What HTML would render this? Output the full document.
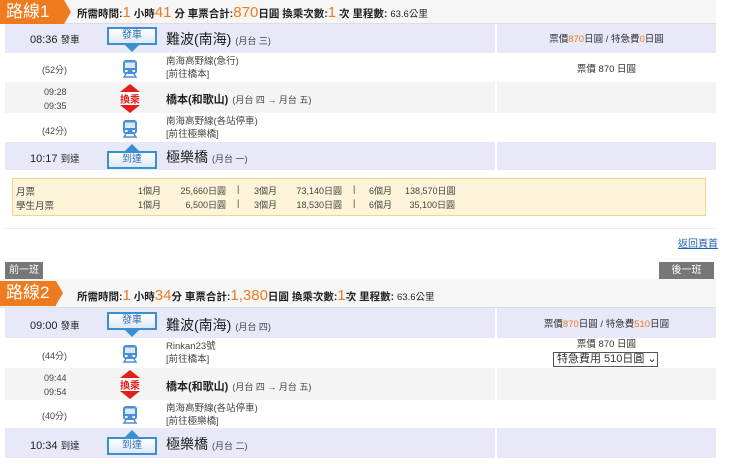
<!DOCTYPE html>
<html><head><meta charset="utf-8"><style>
*{margin:0;padding:0;box-sizing:border-box}
body{width:740px;height:464px;background:#fff;position:relative;overflow:hidden;font-family:"Liberation Sans","Noto Sans CJK TC",sans-serif;color:#333}
.a{position:absolute}
.hdr{background:#f6f6f6;border-bottom:1px solid #ddd}
.tag{background:#ef7b1f;color:#fff;font-size:17px;line-height:24px;padding-left:6px}
.tag:after{content:"";position:absolute;right:-7px;top:0;border-left:7px solid #ef7b1f;border-top:12px solid transparent;border-bottom:12px solid transparent}
.sum{font-size:10.5px;font-weight:bold;color:#222;white-space:nowrap}
.sum .o{color:#ef7b1f;font-weight:normal;font-size:15px}
.sum .n{font-weight:normal;font-size:9.5px}
.row{left:5px;width:711px}
.lav{background:#e7e9f8}
.gry{background:#f4f4f4}
.div{left:495px;width:2px;background:#fff}
.t{font-size:11px;color:#222;white-space:nowrap}
.s{font-size:9px;color:#444;white-space:nowrap}
.st{font-size:14px;color:#222;white-space:nowrap}
.st small{font-size:9px;color:#444;margin-left:4px}
.ln{font-size:9.5px;color:#444;line-height:13px;white-space:nowrap}
.badge{width:50px;height:18px;border:2px solid #3a8fd0;background:linear-gradient(#fff,#dde9f6);color:#2a6db5;font-size:10px;text-align:center;line-height:14px}
.tri-d{width:0;height:0;border-left:7px solid transparent;border-right:7px solid transparent;border-top:7px solid #3a8fd0}
.tri-u{width:0;height:0;border-left:7px solid transparent;border-right:7px solid transparent;border-bottom:7px solid #3a8fd0}
.pr{font-size:9.5px;line-height:12px;color:#333;text-align:center;white-space:nowrap}
.pr b{color:#ef7b1f;font-weight:normal}
.btn{background:#777;color:#fff;font-size:10px;text-align:center;line-height:17px}
</style></head><body>

<!-- ROUTE 1 -->
<div class="a hdr" style="left:0;top:0;width:716px;height:24px"></div>
<div class="a tag" style="left:0;top:0;width:64px;height:24px">路線1</div>
<div class="a sum" style="left:77px;top:4px">所需時間:<span class="o">1</span> 小時<span class="o">41</span> 分 車票合計:<span class="o">870</span>日圓 換乘次數:<span class="o">1</span> 次 里程數: <span class="n">63.6公里</span></div>

<div class="a row lav" style="top:24px;height:29px"></div>
<div class="a row" style="top:53px;height:29px;background:#fff"></div>
<div class="a row gry" style="top:82px;height:31px"></div>
<div class="a row" style="top:113px;height:29px;background:#fff"></div>
<div class="a row lav" style="top:142px;height:28px"></div>
<div class="a div" style="top:24px;height:146px"></div>

<div class="a t" style="left:30px;top:32px">08:36 <span style="font-size:9.5px">發車</span></div>
<div class="a badge" style="left:107px;top:27px">發車</div>
<div class="a tri-d" style="left:125px;top:45px"></div>
<div class="a st" style="left:166px;top:29px">難波(南海)<small>(月台 三)</small></div>
<div class="a pr" style="left:497px;width:219px;top:34px">票價<b>870</b>日圓 / 特急費<b>0</b>日圓</div>

<div class="a s" style="left:42px;top:63px">(52分)</div>
<svg class="a" style="left:122px;top:59px" width="16" height="20" viewBox="0 0 16 20"><rect x="1" y="1" width="14" height="14" rx="3" fill="#4a8fd4"/><rect x="3" y="3.5" width="10" height="5.5" fill="#dbe9f7"/><rect x="3" y="11" width="2.5" height="2" fill="#fff"/><rect x="10.5" y="11" width="2.5" height="2" fill="#fff"/><path d="M4 15 L1.5 19 M12 15 L14.5 19 M3 18 H13" stroke="#4a8fd4" stroke-width="1.5"/></svg>
<div class="a ln" style="left:166px;top:55px">南海高野線(急行)<br>[前往橋本]</div>
<div class="a pr" style="left:497px;width:219px;top:64px">票價 870 日圓</div>

<div class="a s" style="left:44px;top:87px">09:28</div>
<div class="a s" style="left:44px;top:101px">09:35</div>
<svg class="a" style="left:120px;top:84px" width="20" height="29" viewBox="0 0 20 29"><path d="M10 0 L20 8 L0 8 Z M0 21 L20 21 L10 29 Z" fill="#e0201a"/><rect x="0" y="8" width="20" height="13" fill="#fff"/></svg>
<div class="a" style="left:118px;top:91px;width:24px;font-size:10px;font-weight:bold;color:#e0201a;text-align:center">換乘</div>
<div class="a st" style="left:166px;top:91px;font-size:11px;font-weight:bold">橋本(和歌山)<small style="font-weight:normal">(月台 四 → 月台 五)</small></div>

<div class="a s" style="left:42px;top:124px">(42分)</div>
<svg class="a" style="left:122px;top:119px" width="16" height="20" viewBox="0 0 16 20"><rect x="1" y="1" width="14" height="14" rx="3" fill="#4a8fd4"/><rect x="3" y="3.5" width="10" height="5.5" fill="#dbe9f7"/><rect x="3" y="11" width="2.5" height="2" fill="#fff"/><rect x="10.5" y="11" width="2.5" height="2" fill="#fff"/><path d="M4 15 L1.5 19 M12 15 L14.5 19 M3 18 H13" stroke="#4a8fd4" stroke-width="1.5"/></svg>
<div class="a ln" style="left:166px;top:115px">南海高野線(各站停車)<br>[前往極樂橋]</div>

<div class="a t" style="left:30px;top:151px">10:17 <span style="font-size:9.5px">到達</span></div>
<div class="a tri-u" style="left:125px;top:144px"></div>
<div class="a badge" style="left:107px;top:151px">到達</div>
<div class="a st" style="left:166px;top:147px">極樂橋<small>(月台 一)</small></div>

<div class="a" style="left:12px;top:178px;width:694px;height:38px;background:#fdf4d9;border:1px solid #eed68a"></div>
<div class="a s" style="left:16px;top:184px;font-size:9.5px">月票</div>
<div class="a s" style="left:16px;top:198px;font-size:9.5px">學生月票</div>
<div class="a s" style="left:138px;top:184px">1個月</div>
<div class="a s" style="left:138px;top:198px">1個月</div>
<div class="a s" style="left:180px;top:184px;width:46px;text-align:right">25,660日圓</div>
<div class="a s" style="left:180px;top:198px;width:46px;text-align:right">6,500日圓</div>
<div class="a s" style="left:237px;top:184px">|</div><div class="a s" style="left:237px;top:198px">|</div>
<div class="a s" style="left:254px;top:184px">3個月</div><div class="a s" style="left:254px;top:198px">3個月</div>
<div class="a s" style="left:295px;top:184px;width:47px;text-align:right">73,140日圓</div>
<div class="a s" style="left:295px;top:198px;width:47px;text-align:right">18,530日圓</div>
<div class="a s" style="left:353px;top:184px">|</div><div class="a s" style="left:353px;top:198px">|</div>
<div class="a s" style="left:369px;top:184px">6個月</div><div class="a s" style="left:369px;top:198px">6個月</div>
<div class="a s" style="left:405px;top:184px;width:50px;text-align:right">138,570日圓</div>
<div class="a s" style="left:405px;top:198px;width:50px;text-align:right">35,100日圓</div>
<div class="a" style="left:5px;top:228px;width:711px;height:1px;background:#eee"></div>

<div class="a" style="left:678px;top:235px;font-size:10px;color:#1a5fb4;text-decoration:underline">返回頁首</div>

<div class="a btn" style="left:5px;top:262px;width:38px;height:17px">前一班</div>
<div class="a btn" style="left:659px;top:262px;width:55px;height:17px">後一班</div>

<!-- ROUTE 2 -->
<div class="a hdr" style="left:0;top:279px;width:716px;height:29px"></div>
<div class="a tag" style="left:0;top:281px;width:56px;height:25px">路線2</div>
<div class="a sum" style="left:77px;top:287px">所需時間:<span class="o">1</span> 小時<span class="o">34</span>分 車票合計:<span class="o">1,380</span>日圓 換乘次數:<span class="o">1</span>次 里程數: <span class="n">63.6公里</span></div>

<div class="a row lav" style="top:308px;height:30px"></div>
<div class="a row" style="top:338px;height:30px;background:#fff"></div>
<div class="a row gry" style="top:368px;height:32px"></div>
<div class="a row" style="top:400px;height:28px;background:#fff"></div>
<div class="a row lav" style="top:428px;height:30px"></div>
<div class="a div" style="top:308px;height:150px"></div>

<div class="a t" style="left:30px;top:318px">09:00 <span style="font-size:9.5px">發車</span></div>
<div class="a badge" style="left:107px;top:312px">發車</div>
<div class="a tri-d" style="left:125px;top:330px"></div>
<div class="a st" style="left:166px;top:315px">難波(南海)<small>(月台 四)</small></div>
<div class="a pr" style="left:497px;width:219px;top:319px">票價<b>870</b>日圓 / 特急費<b>510</b>日圓</div>

<div class="a s" style="left:42px;top:349px">(44分)</div>
<svg class="a" style="left:122px;top:344px" width="16" height="20" viewBox="0 0 16 20"><rect x="1" y="1" width="14" height="14" rx="3" fill="#4a8fd4"/><rect x="3" y="3.5" width="10" height="5.5" fill="#dbe9f7"/><rect x="3" y="11" width="2.5" height="2" fill="#fff"/><rect x="10.5" y="11" width="2.5" height="2" fill="#fff"/><path d="M4 15 L1.5 19 M12 15 L14.5 19 M3 18 H13" stroke="#4a8fd4" stroke-width="1.5"/></svg>
<div class="a ln" style="left:166px;top:340px">Rinkan23號<br>[前往橋本]</div>
<div class="a pr" style="left:497px;width:219px;top:339px">票價 870 日圓</div>
<div class="a" style="left:553px;top:352px;width:105px;height:15px;border:1px solid #555;background:#fff;font-size:11px;line-height:13px;padding-left:3px;white-space:nowrap">特急費用 510日圓 ⌄</div>

<div class="a s" style="left:44px;top:373px">09:44</div>
<div class="a s" style="left:44px;top:387px">09:54</div>
<svg class="a" style="left:120px;top:370px" width="20" height="29" viewBox="0 0 20 29"><path d="M10 0 L20 8 L0 8 Z M0 21 L20 21 L10 29 Z" fill="#e0201a"/><rect x="0" y="8" width="20" height="13" fill="#fff"/></svg>
<div class="a" style="left:118px;top:377px;width:24px;font-size:10px;font-weight:bold;color:#e0201a;text-align:center">換乘</div>
<div class="a st" style="left:166px;top:378px;font-size:11px;font-weight:bold">橋本(和歌山)<small style="font-weight:normal">(月台 四 → 月台 五)</small></div>

<div class="a s" style="left:42px;top:409px">(40分)</div>
<svg class="a" style="left:122px;top:405px" width="16" height="20" viewBox="0 0 16 20"><rect x="1" y="1" width="14" height="14" rx="3" fill="#4a8fd4"/><rect x="3" y="3.5" width="10" height="5.5" fill="#dbe9f7"/><rect x="3" y="11" width="2.5" height="2" fill="#fff"/><rect x="10.5" y="11" width="2.5" height="2" fill="#fff"/><path d="M4 15 L1.5 19 M12 15 L14.5 19 M3 18 H13" stroke="#4a8fd4" stroke-width="1.5"/></svg>
<div class="a ln" style="left:166px;top:402px">南海高野線(各站停車)<br>[前往極樂橋]</div>

<div class="a t" style="left:30px;top:438px">10:34 <span style="font-size:9.5px">到達</span></div>
<div class="a tri-u" style="left:125px;top:430px"></div>
<div class="a badge" style="left:107px;top:437px">到達</div>
<div class="a st" style="left:166px;top:434px">極樂橋<small>(月台 二)</small></div>

</body></html>
